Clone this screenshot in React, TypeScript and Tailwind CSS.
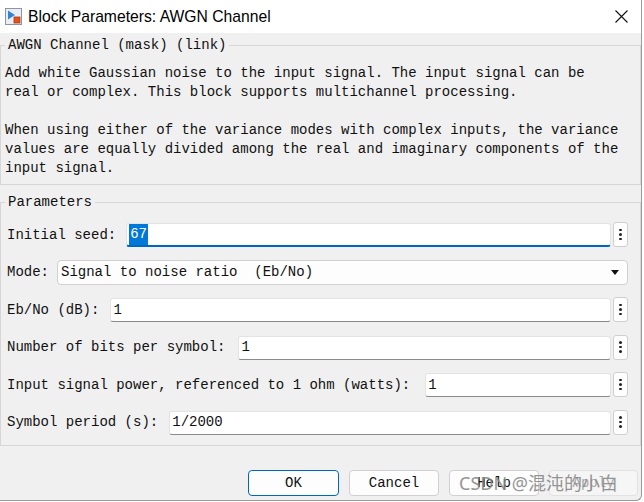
import React from "react";

const mono = "font-['Liberation_Mono',monospace] text-[14px] leading-[19px] text-[#111]";

function BlockIcon() {
  return (
    <svg width="17" height="17" viewBox="0 0 17 17">
      <rect x="0.5" y="0.5" width="16" height="16" fill="#e9eef4" stroke="#8a96a3" />
      <path d="M3 2.5 L10 7 L3 11.5 Z" fill="#2f86d6" />
      <rect x="9" y="9" width="6" height="6" fill="#e0531f" stroke="#b33a10" strokeWidth="0.8" />
    </svg>
  );
}

function Dots() {
  return (
    <button className="ml-[2px] w-[15px] h-[25px] -mt-px shrink-0 bg-[#fdfdfd] border border-[#cfcfcf] rounded-[3px] flex flex-col items-center justify-center gap-[2px]">
      <span className="w-[2.5px] h-[2.5px] bg-[#222] rounded-full" />
      <span className="w-[2.5px] h-[2.5px] bg-[#222] rounded-full" />
      <span className="w-[2.5px] h-[2.5px] bg-[#222] rounded-full" />
    </button>
  );
}

function ParamRow({
  label,
  value,
  gap,
  focused = false,
}: {
  label: string;
  value: string;
  gap: string;
  focused?: boolean;
}) {
  return (
    <div className="flex items-center h-[24px]">
      <span className={`${mono} whitespace-pre shrink-0`}>{label}</span>
      <div
        className={`${gap} flex-1 h-[24px] bg-white rounded-[3px] border border-[#e3e3e3] flex items-center pl-[2px] ${
          focused ? "border-b-2 border-b-[#0067c0]" : "border-b-[#8a8a8a]"
        }`}
      >
        {focused ? (
          <span className={`${mono} bg-[#0078d7] text-white leading-[21px] px-px`}>{value}</span>
        ) : (
          <span className={mono}>{value}</span>
        )}
      </div>
      <Dots />
    </div>
  );
}

export default function App() {
  return (
    <div className="w-[644px] h-[502px] bg-white">
      <div className="w-[642px] h-[501px] bg-[#f0f0f0] border-r border-b border-[#9a9a9a] rounded-br-[6px] flex flex-col relative overflow-hidden">
        {/* Title bar */}
        <div className="h-[33px] bg-white flex items-center pl-[5px] pr-[13px] shrink-0">
          <BlockIcon />
          <span className="ml-[6px] text-[15.7px] text-black font-['Liberation_Sans',sans-serif]">
            Block Parameters: AWGN Channel
          </span>
          <svg className="ml-auto" width="13" height="13" viewBox="0 0 13 13">
            <path d="M0.5 0.5 L12.5 12.5 M12.5 0.5 L0.5 12.5" stroke="#111" strokeWidth="1.1" />
          </svg>
        </div>

        {/* Description group */}
        <fieldset className="mt-[3px] border border-[#d6d6d6] pl-[4px] pr-[8px] pt-[9px] pb-[6px]">
          <legend className={`${mono} px-[3px]`}>AWGN Channel (mask) (link)</legend>
          <p className={`${mono} whitespace-pre`}>
            {"Add white Gaussian noise to the input signal. The input signal can be\n" +
              "real or complex. This block supports multichannel processing.\n\n" +
              "When using either of the variance modes with complex inputs, the variance\n" +
              "values are equally divided among the real and imaginary components of the\n" +
              "input signal."}
          </p>
        </fieldset>

        {/* Parameters group */}
        <fieldset className="mt-[8px] border border-[#d6d6d6] pl-[6px] pr-[12px] pt-[11px] pb-[10px]">
          <legend className={`${mono} px-[3px] -ml-[2px]`}>Parameters</legend>
          <div className="flex flex-col gap-[13.5px]">
            <ParamRow label="Initial seed:" value="67" gap="ml-[10px]" focused />
            <div className="flex items-center h-[24px]">
              <span className={`${mono} shrink-0`}>Mode:</span>
              <div className="ml-[8px] flex-1 h-[25px] bg-[#fdfdfd] border border-[#d0d0d0] rounded-[4px] flex items-center pl-[3px] pr-[8px]">
                <span className={`${mono} whitespace-pre`}>Signal to noise ratio  (Eb/No)</span>
                <svg className="ml-auto" width="8" height="5" viewBox="0 0 8 5">
                  <path d="M0 0 L8 0 L4 5 Z" fill="#111" />
                </svg>
              </div>
            </div>
            <ParamRow label="Eb/No (dB):" value="1" gap="ml-[11px]" />
            <ParamRow label="Number of bits per symbol:" value="1" gap="ml-[13px]" />
            <ParamRow label="Input signal power, referenced to 1 ohm (watts):" value="1" gap="ml-[15px]" />
            <ParamRow label="Symbol period (s):" value="1/2000" gap="ml-[11px]" />
          </div>
        </fieldset>

        {/* Buttons */}
        <div className="mt-auto mb-[4px] flex gap-[10px] pl-[248px]">
          <button className={`${mono} w-[91px] h-[26px] bg-[#fdfdfd] border border-[#0067c0] rounded-[4px]`}>OK</button>
          <button className={`${mono} w-[90px] h-[26px] bg-[#fdfdfd] border border-[#d0d0d0] rounded-[4px]`}>Cancel</button>
          <button className={`${mono} w-[90px] h-[26px] bg-[#fdfdfd] border border-[#d0d0d0] rounded-[4px]`}>Help</button>
          <button className={`${mono} w-[89px] h-[26px] bg-[#f6f6f6] border border-[#e2e2e2] rounded-[4px] !text-[#a8a8a8]`}>Apply</button>
        </div>

        {/* Watermark */}
        <span className="absolute left-[459px] top-[472px] text-[18px] leading-[22px] text-[#8a8a8a] opacity-90 font-['Noto_Sans','Noto_Sans_CJK_SC',sans-serif] whitespace-pre">
          CSDN @混沌的小白
        </span>
      </div>
    </div>
  );
}
